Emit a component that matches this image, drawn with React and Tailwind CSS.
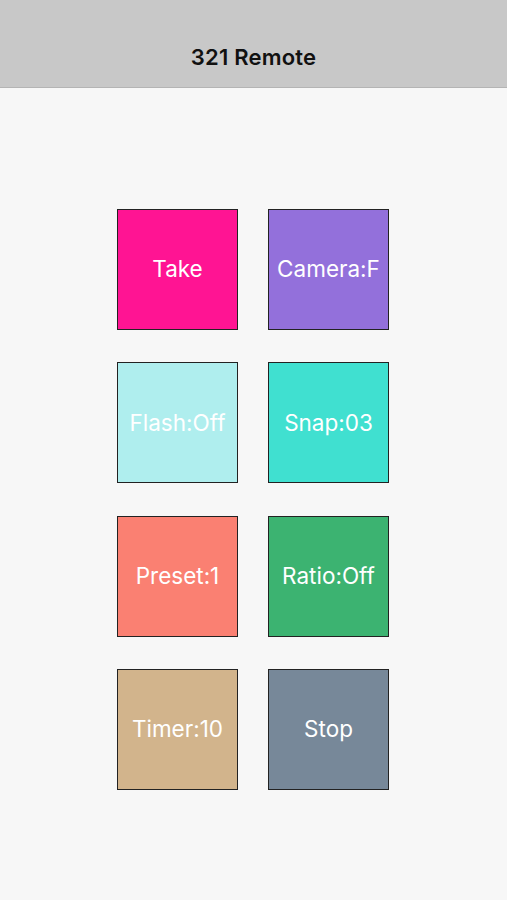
export default function App() {
  const buttons = [
    { label: "Take", bg: "bg-[#ff1493]" },
    { label: "Camera:F", bg: "bg-[#9370db]" },
    { label: "Flash:Off", bg: "bg-[#afeeee]" },
    { label: "Snap:03", bg: "bg-[#40e0d0]" },
    { label: "Preset:1", bg: "bg-[#fa8072]" },
    { label: "Ratio:Off", bg: "bg-[#3cb371]" },
    { label: "Timer:10", bg: "bg-[#d2b48c]" },
    { label: "Stop", bg: "bg-[#778899]" },
  ];
  return (
    <div className="w-[507px] h-[900px] bg-[#f7f7f7] flex flex-col" style={{ fontFamily: "Inter, 'Noto Sans', sans-serif" }}>
      <div className="h-[88px] bg-[#c8c8c8] border-b border-[#b4b4b4] flex items-end justify-center pb-[19px] shrink-0">
        <span className="text-[22px] font-semibold text-[#111] leading-none tracking-[0.2px]">321 Remote</span>
      </div>
      <div className="flex pl-[117px] pt-[121px]">
        <div className="grid grid-cols-[121px_121px] gap-x-[30px] gap-y-[32.33px]">
          {buttons.map((b) => (
            <div
              key={b.label}
              className={`w-[121px] h-[121px] ${b.bg} border border-[#222] flex items-center justify-center text-white text-[22.5px] leading-none`}
            >
              {b.label}
            </div>
          ))}
        </div>
      </div>
    </div>
  );
}
